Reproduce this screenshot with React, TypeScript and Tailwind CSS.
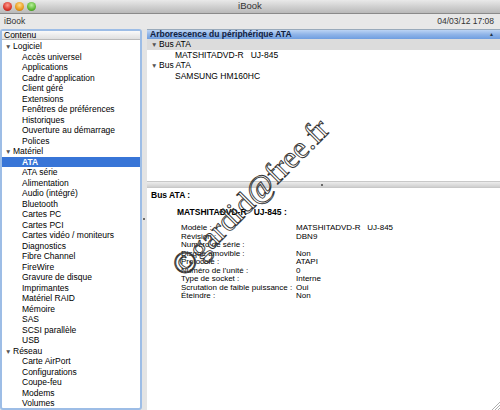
const sidebar: { label: string; level: number; selected?: boolean }[] = [
  { label: 'Logiciel', level: 0 },
  { label: 'Accès universel', level: 1 },
  { label: 'Applications', level: 1 },
  { label: 'Cadre d’application', level: 1 },
  { label: 'Client géré', level: 1 },
  { label: 'Extensions', level: 1 },
  { label: 'Fenêtres de préférences', level: 1 },
  { label: 'Historiques', level: 1 },
  { label: 'Ouverture au démarrage', level: 1 },
  { label: 'Polices', level: 1 },
  { label: 'Matériel', level: 0 },
  { label: 'ATA', level: 1, selected: true },
  { label: 'ATA série', level: 1 },
  { label: 'Alimentation', level: 1 },
  { label: 'Audio (intégré)', level: 1 },
  { label: 'Bluetooth', level: 1 },
  { label: 'Cartes PC', level: 1 },
  { label: 'Cartes PCI', level: 1 },
  { label: 'Cartes vidéo / moniteurs', level: 1 },
  { label: 'Diagnostics', level: 1 },
  { label: 'Fibre Channel', level: 1 },
  { label: 'FireWire', level: 1 },
  { label: 'Gravure de disque', level: 1 },
  { label: 'Imprimantes', level: 1 },
  { label: 'Matériel RAID', level: 1 },
  { label: 'Mémoire', level: 1 },
  { label: 'SAS', level: 1 },
  { label: 'SCSI parallèle', level: 1 },
  { label: 'USB', level: 1 },
  { label: 'Réseau', level: 0 },
  { label: 'Carte AirPort', level: 1 },
  { label: 'Configurations', level: 1 },
  { label: 'Coupe-feu', level: 1 },
  { label: 'Modems', level: 1 },
  { label: 'Volumes', level: 1 },
]

const props: [string, string][] = [
  ['Modèle :', 'MATSHITADVD-R   UJ-845'],
  ['Révision :', 'DBN9'],
  ['Numéro de série :', ''],
  ['Disque amovible :', 'Non'],
  ['Protocole :', 'ATAPI'],
  ['Numéro de l’unité :', '0'],
  ['Type de socket :', 'Interne'],
  ['Scrutation de faible puissance :', 'Oui'],
  ['Éteindre :', 'Non'],
]

const Tri = () => <span className="inline-block w-[8px] text-[6.5px] text-[#555] leading-none">▼</span>

export default function App() {
  return (
    <div className="relative w-[500px] h-[410px] overflow-hidden bg-[#e6e6e6] text-[8.5px] text-black [font-family:'Liberation_Sans',Arial,sans-serif]">
      {/* title bar */}
      <div className="relative h-[14px] bg-gradient-to-b from-[#e9e9e9] to-[#b9b9b9] border-b border-[#8a8a8a] flex items-center">
        <div className="flex gap-[3px] pl-[3px]">
          <span className="w-[9px] h-[9px] rounded-full bg-[radial-gradient(circle_at_50%_35%,#ff9c8e,#d8352a_60%,#9a1c12)]" />
          <span className="w-[9px] h-[9px] rounded-full bg-[radial-gradient(circle_at_50%_35%,#ffdc8a,#e99a1c_60%,#a5650c)]" />
          <span className="w-[9px] h-[9px] rounded-full bg-[radial-gradient(circle_at_50%_35%,#b8f09a,#5cb834_60%,#2f7a14)]" />
        </div>
        <span className="absolute left-0 right-0 text-center text-[9.5px] text-[#333]">iBook</span>
      </div>

      {/* toolbar */}
      <div className="h-[15px] bg-[#e8e8e8] flex items-center justify-between px-[4px] text-[8.5px] text-[#333]">
        <span>iBook</span>
        <span className="pr-[2px]">04/03/12 17:08</span>
      </div>

      <div className="flex h-[381px]">
        {/* sidebar */}
        <div className="w-[142px] h-full border-2 border-[#9dbde6] rounded-[3px] bg-white flex flex-col overflow-hidden">
          <div className="h-[9px] leading-[9px] px-[2px] bg-gradient-to-b from-[#fafafa] to-[#e0e0e0] border-b border-[#bbb]">Contenu</div>
          <div className="pt-[1px]">
            {sidebar.map((r) => (
              <div
                key={r.label}
                className={
                  'h-[10.5px] leading-[10.5px] whitespace-nowrap ' +
                  (r.selected ? 'bg-[#3875d7] text-white font-bold' : '')
                }
                style={{ paddingLeft: r.level === 0 ? 3 : 20 }}
              >
                {r.level === 0 && <Tri />}
                {r.label}
              </div>
            ))}
          </div>
        </div>

        {/* vertical splitter */}
        <div className="relative w-[5px] bg-[#e4e4e4]">
          <span className="absolute left-[1px] top-[189px] w-[2px] h-[2px] bg-[#444] rounded-full" />
        </div>

        {/* right side */}
        <div className="flex-1 flex flex-col">
          <div className="h-[152px] bg-white flex flex-col border-t border-[#9ab]">
            <div className="relative h-[9px] leading-[9px] px-[3px] font-bold text-[#102040] bg-gradient-to-b from-[#bcd4f4] via-[#8fb4e8] to-[#6f9ee0]">
              Arborescence du périphérique ATA
              <span className="absolute right-[6px] top-0 text-[5px] text-[#234]">▲</span>
            </div>
            <div className="h-[10.5px] leading-[10.5px] bg-[#dcdcdc] pl-[4px]"><Tri />Bus ATA</div>
            <div className="h-[10.5px] leading-[10.5px] pl-[28px] whitespace-pre">MATSHITADVD-R   UJ-845</div>
            <div className="h-[10.5px] leading-[10.5px] pl-[4px]"><Tri />Bus ATA</div>
            <div className="h-[10.5px] leading-[10.5px] pl-[28px]">SAMSUNG HM160HC</div>
          </div>

          {/* horizontal splitter */}
          <div className="relative h-[7px] bg-gradient-to-b from-[#ececec] via-[#dedede] to-[#cfcfcf] border-y border-[#c8c8c8]">
            <span className="absolute left-[174px] top-[2px] w-[2px] h-[2px] bg-[#444] rounded-full" />
          </div>

          <div className="flex-1 bg-white pl-[4px] pt-[2px]">
            <div className="font-bold h-[10px] leading-[10px]">Bus ATA :</div>
            <div className="font-bold pl-[26px] mt-[7px] h-[10px] leading-[10px] whitespace-pre">MATSHITADVD-R   UJ-845 :</div>
            <div className="pl-[30px] mt-[7px] text-[8px]">
              {props.map(([k, v]) => (
                <div key={k} className="flex h-[8.5px] leading-[8.5px] whitespace-pre">
                  <span className="w-[115px]">{k}</span>
                  <span>{v}</span>
                </div>
              ))}
            </div>
          </div>
        </div>
      </div>

      {/* watermark */}
      <svg className="absolute left-0 top-0 pointer-events-none" width="500" height="410">
        <text
          x="0"
          y="0"
          transform="translate(184 278) rotate(-45)"
          fontFamily="'Liberation Serif', serif"
          fontSize="31"
          fill="none"
          stroke="#333"
          strokeWidth="0.9"
        >
          ©gardid@free.fr
        </text>
      </svg>

      {/* resize grip */}
      <svg className="absolute right-0 bottom-0" width="10" height="10">
        <path d="M2 10 L10 2 M5 10 L10 5 M8 10 L10 8" stroke="#999" strokeWidth="0.8" />
      </svg>
    </div>
  )
}
